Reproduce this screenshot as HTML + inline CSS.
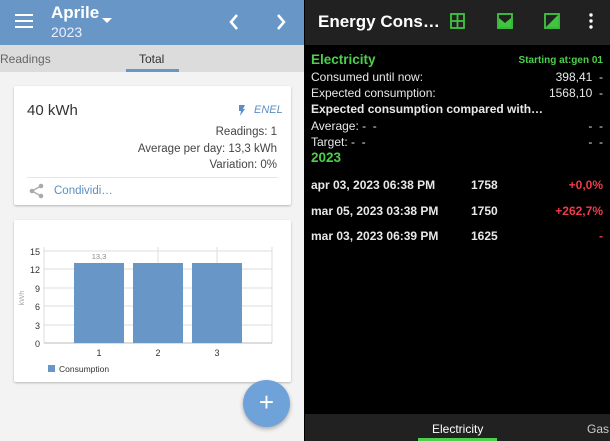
<!DOCTYPE html>
<html><head><style>
*{margin:0;padding:0;box-sizing:border-box}
body{width:610px;height:441px;overflow:hidden;font-family:"Liberation Sans",sans-serif;position:relative;background:#000}
.a{position:absolute}
.l{left:0;top:0;width:304px;height:441px;background:#f3f3f3}
.card{background:#fff;box-shadow:0 1px 2px rgba(0,0,0,.25);border-radius:2px}
.r{left:305px;top:0;width:305px;height:441px;background:#000;color:#e8e8e8}
.g{color:#4cd04c;font-weight:bold}
.row{font-size:12px}
.b{font-weight:bold;font-size:12px}
</style></head><body>
<div class="a l">
 <div class="a" style="left:0;top:0;width:304px;height:45px;background:#6897c7"></div>
 <div class="a" style="left:15px;top:14px;width:18px;height:2px;background:#fff;box-shadow:0 6px 0 #fff,0 12px 0 #fff"></div>
 <div class="a" style="left:51px;top:3px;color:#fff;font-size:17px;font-weight:bold">Aprile</div>
 <div class="a" style="left:51px;top:24px;color:#eef;font-size:14px">2023</div>
 <div class="a" style="left:102px;top:18px;width:0;height:0;border-left:5px solid transparent;border-right:5px solid transparent;border-top:5px solid #fff"></div>
 <svg class="a" style="left:226px;top:12px" width="70" height="20"><path d="M11 3 L5 10 L11 17" stroke="#fff" stroke-width="2.5" fill="none"/><path d="M52 3 L58 10 L52 17" stroke="#fff" stroke-width="2.5" fill="none"/></svg>
 <div class="a" style="left:0;top:45px;width:304px;height:27px;background:#dcdcdc"></div>
 <div class="a" style="left:0;top:52px;font-size:12px;color:#666">Readings</div>
 <div class="a" style="left:139px;top:52px;font-size:12px;color:#333">Total</div>
 <div class="a" style="left:126px;top:69px;width:53px;height:3px;background:#6897c7"></div>
 <div class="a card" style="left:14px;top:86px;width:277px;height:119px"></div>
 <div class="a" style="left:27px;top:102px;font-size:15px;color:#333">40 kWh</div>
 <svg class="a" style="left:238px;top:105px" width="8" height="11"><path d="M1 0H7L5 4H7L2 11L3 6H1Z" fill="#5b8fc4"/></svg>
 <div class="a" style="left:254px;top:104px;font-size:11px;color:#5b8fc4;font-style:italic">ENEL</div>
 <div class="a" style="right:27px;top:124px;font-size:11.5px;color:#444;text-align:right;line-height:16.5px;width:200px">Readings: 1<br>Average per day: 13,3 kWh<br>Variation: 0%</div>
 <div class="a" style="left:27px;top:177px;width:251px;height:1px;background:#e6e6e6"></div>
 <svg class="a" style="left:29px;top:183px" width="16" height="16"><circle cx="12" cy="3" r="2.3" fill="#aaa"/><circle cx="3" cy="8" r="2.3" fill="#aaa"/><circle cx="12" cy="13" r="2.3" fill="#aaa"/><path d="M12 3L3 8L12 13" stroke="#aaa" stroke-width="1.3" fill="none"/></svg>
 <div class="a" style="left:54px;top:185px;font-size:11.5px;color:#5b8fc4">Condividi…</div>
 <div class="a card" style="left:14px;top:220px;width:277px;height:162px"></div>
 <svg class="a" style="left:0;top:0" width="304" height="441" font-family="Liberation Sans" font-size="9">
  <g stroke="#ddd" stroke-width="1">
   <line x1="44" y1="251" x2="272" y2="251"/><line x1="44" y1="269" x2="272" y2="269"/><line x1="44" y1="288" x2="272" y2="288"/><line x1="44" y1="306" x2="272" y2="306"/><line x1="44" y1="325" x2="272" y2="325"/>
   <line x1="44" y1="247" x2="44" y2="343"/><line x1="272" y1="247" x2="272" y2="343"/><line x1="158" y1="247" x2="158" y2="343"/><line x1="217" y1="247" x2="217" y2="343"/>
  </g>
  <line x1="44" y1="343" x2="272" y2="343" stroke="#bbb"/>
  <g fill="#6897c7"><rect x="74" y="263" width="50" height="80"/><rect x="133" y="263" width="50" height="80"/><rect x="192" y="263" width="50" height="80"/></g>
  <g fill="#333" text-anchor="end"><text x="40" y="255">15</text><text x="40" y="273">12</text><text x="40" y="292">9</text><text x="40" y="310">6</text><text x="40" y="329">3</text><text x="40" y="347">0</text></g>
  <text x="99" y="259" fill="#888" font-size="7.5" text-anchor="middle">13,3</text>
  <text x="24" y="298" fill="#aaa" font-size="7.5" transform="rotate(-90 24 298)" text-anchor="middle">kWh</text>
  <g fill="#333" text-anchor="middle"><text x="99" y="356">1</text><text x="158" y="356">2</text><text x="217" y="356">3</text></g>
  <rect x="48" y="365" width="7" height="7" fill="#6897c7"/><text x="59" y="372" fill="#333" font-size="8.5">Consumption</text>
 </svg>
 <div class="a" style="left:243px;top:380px;width:47px;height:47px;border-radius:50%;background:#6ea2d8;box-shadow:0 2px 4px rgba(0,0,0,.3);color:#fff;font-size:26px;text-align:center;line-height:45px">+</div>
</div>
<div class="a r">
 <div class="a" style="left:0;top:0;width:305px;height:45px;background:#212121"></div>
 <div class="a" style="left:13px;top:12px;font-size:17px;font-weight:bold;color:#fff">Energy Cons…</div>
 <svg class="a" style="left:0;top:0" width="305" height="45">
  <g stroke="#3fc63f" stroke-width="1.8" fill="none"><rect x="146" y="14" width="13" height="14"/><line x1="152.5" y1="14" x2="152.5" y2="28"/><line x1="146" y1="21" x2="159" y2="21"/></g>
  <rect x="193" y="14" width="14" height="14" fill="none" stroke="#3fc63f" stroke-width="1.8"/><path d="M194 18 L200 23 L206 18 V27 H194Z" fill="#3fc63f"/>
  <rect x="240" y="14" width="14" height="14" fill="none" stroke="#3fc63f" stroke-width="1.8"/><path d="M253 15 V27 H241Z" fill="#3fc63f"/>
  <g fill="#fff"><circle cx="286" cy="15" r="1.7"/><circle cx="286" cy="21" r="1.7"/><circle cx="286" cy="27" r="1.7"/></g>
 </svg>
 <div class="a g" style="left:6px;top:52px;font-size:13.5px">Electricity</div>
 <div class="a g" style="right:7px;top:55px;font-size:10px">Starting at:gen 01</div>
 <div class="a row" style="left:6px;top:70px">Consumed until now:</div><div class="a row" style="right:7px;top:70px">398,41 &nbsp;-</div>
 <div class="a row" style="left:6px;top:86px">Expected consumption:</div><div class="a row" style="right:7px;top:86px">1568,10 &nbsp;-</div>
 <div class="a b" style="left:6px;top:102px">Expected consumption compared with…</div>
 <div class="a row" style="left:6px;top:119px">Average: - &nbsp;-</div><div class="a row" style="right:7px;top:119px">- &nbsp;-</div>
 <div class="a row" style="left:6px;top:135px">Target: - &nbsp;-</div><div class="a row" style="right:7px;top:135px">- &nbsp;-</div>
 <div class="a g" style="left:6px;top:150px;font-size:13.5px">2023</div>
 <div class="a b" style="left:6px;top:178px">apr 03, 2023 06:38 PM</div><div class="a b" style="left:166px;top:178px">1758</div><div class="a b" style="right:7px;top:178px;color:#f03a4a">+0,0%</div>
 <div class="a b" style="left:6px;top:204px">mar 05, 2023 03:38 PM</div><div class="a b" style="left:166px;top:204px">1750</div><div class="a b" style="right:7px;top:204px;color:#f03a4a">+262,7%</div>
 <div class="a b" style="left:6px;top:229px">mar 03, 2023 06:39 PM</div><div class="a b" style="left:166px;top:229px">1625</div><div class="a b" style="right:7px;top:229px;color:#f03a4a">-</div>
 <div class="a" style="left:0;top:414px;width:305px;height:27px;background:#212121"></div>
 <div class="a" style="left:127px;top:422px;font-size:12px;color:#fff">Electricity</div>
 <div class="a" style="left:282px;top:422px;font-size:12px;color:#ccc">Gas</div>
 <div class="a" style="left:113px;top:438px;width:79px;height:3px;background:#4cd04c"></div>
</div>
</body></html>
